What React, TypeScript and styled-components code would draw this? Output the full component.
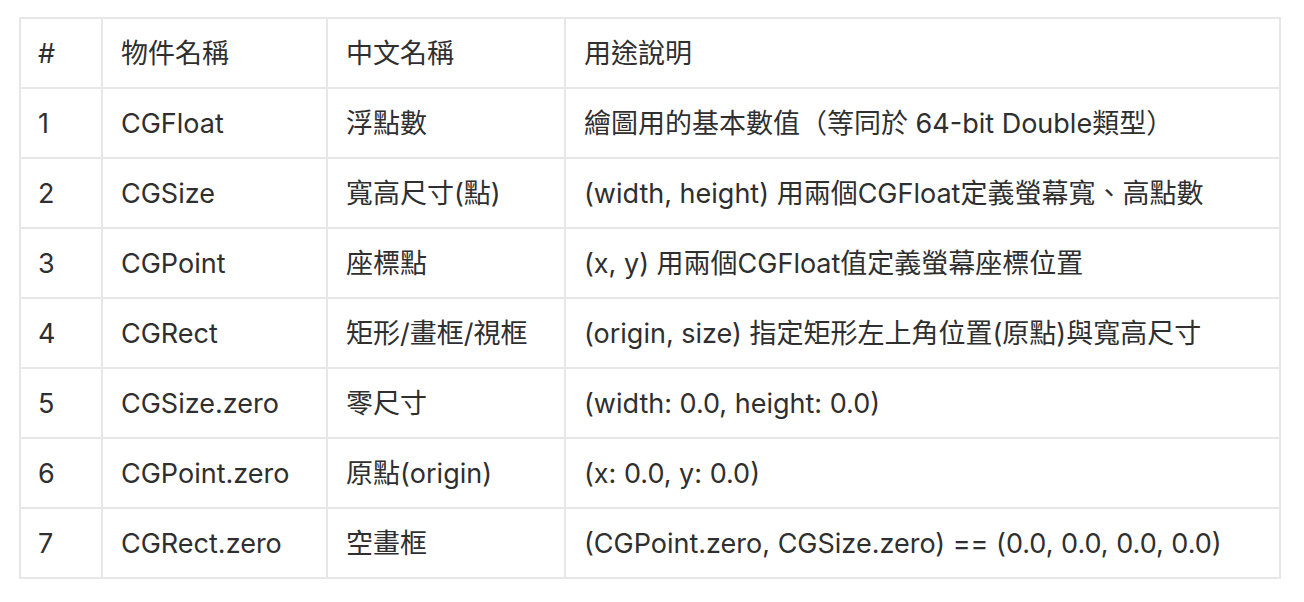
import React from "react";
import styled, { createGlobalStyle } from "styled-components";

const Global = createGlobalStyle`
  html, body { margin: 0; padding: 0; background: #ffffff; }
  body { font-family: "Inter", "Noto Sans CJK TC", sans-serif; }
`;

const Page = styled.div`
  padding: 17px 0 0 19px;
`;

const Table = styled.table`
  table-layout: fixed;
  width: 1262px;
  border-collapse: separate;
  border-spacing: 2px;
  background: #e7e7e7;
`;

const Cell = styled.td<{ $w?: number }>`
  background: #ffffff;
  height: 68px;
  padding: 2px 0 0 ${(p) => (p.$w === 80 ? 17 : 18)}px;
  box-sizing: border-box;
  ${(p) => (p.$w ? `width: ${p.$w}px;` : "")}
  font-family: "Inter", "Noto Sans CJK TC", sans-serif;
  font-size: 27px;
  line-height: 1.2;
  color: #2f2f2f;
  white-space: nowrap;
  vertical-align: middle;
  text-align: left;
  font-weight: 400;
`;

const HeadCell = styled(Cell).attrs({ as: "th" })``;

const rows: [string, string, string, string][] = [
  ["1", "CGFloat", "浮點數", "繪圖用的基本數值（等同於 64-bit Double類型）"],
  ["2", "CGSize", "寬高尺寸(點)", "(width, height) 用兩個CGFloat定義螢幕寬、高點數"],
  ["3", "CGPoint", "座標點", "(x, y) 用兩個CGFloat值定義螢幕座標位置"],
  ["4", "CGRect", "矩形/畫框/視框", "(origin, size) 指定矩形左上角位置(原點)與寬高尺寸"],
  ["5", "CGSize.zero", "零尺寸", "(width: 0.0, height: 0.0)"],
  ["6", "CGPoint.zero", "原點(origin)", "(x: 0.0, y: 0.0)"],
  ["7", "CGRect.zero", "空畫框", "(CGPoint.zero, CGSize.zero) == (0.0, 0.0, 0.0, 0.0)"],
];

export default function App() {
  return (
    <>
      <Global />
      <Page>
        <Table>
          <thead>
            <tr>
              <HeadCell $w={80}>#</HeadCell>
              <HeadCell $w={223}>物件名稱</HeadCell>
              <HeadCell $w={236}>中文名稱</HeadCell>
              <HeadCell>用途說明</HeadCell>
            </tr>
          </thead>
          <tbody>
            {rows.map((r) => (
              <tr key={r[0]}>
                <Cell $w={80}>{r[0]}</Cell>
                <Cell>{r[1]}</Cell>
                <Cell>{r[2]}</Cell>
                <Cell>{r[3]}</Cell>
              </tr>
            ))}
          </tbody>
        </Table>
      </Page>
    </>
  );
}
